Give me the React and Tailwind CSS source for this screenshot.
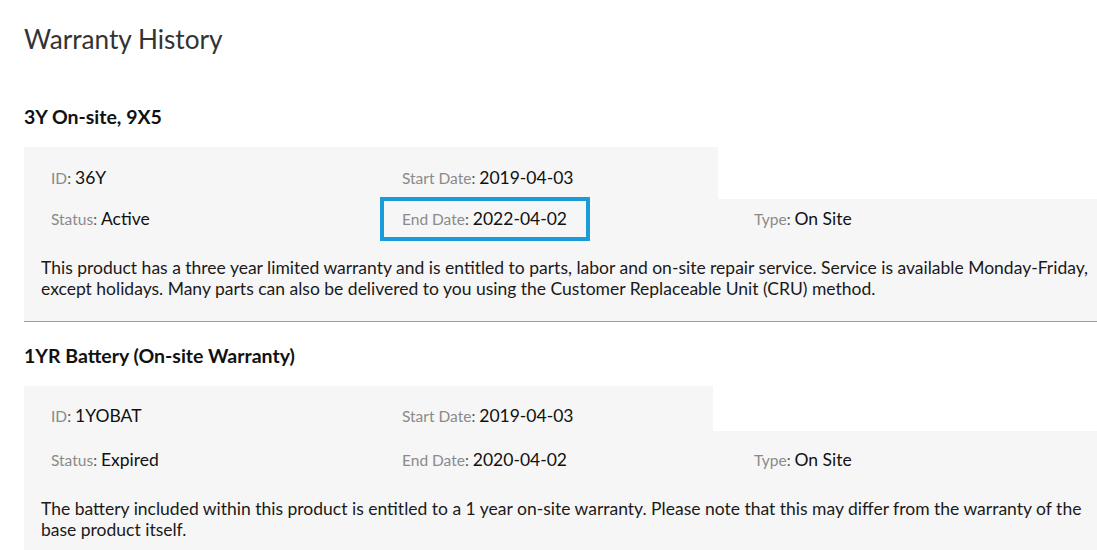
const Field = ({ label, value }) => (
  <span className="whitespace-nowrap">
    <span className="text-[15.5px] text-[#8a8a8a]">{label}</span>
    <span className="text-[15.5px] text-[#555]">: </span>
    <span className="text-[17.5px] text-[#111]">{value}</span>
  </span>
);

const Highlight = ({ children }) => (
  <span className="inline-flex items-center h-[44px] -ml-[22px] pl-[18px] pr-[19px] border-4 border-[#1a9cd8]">
    {children}
  </span>
);

const App = () => {
  return (
    <div className="w-[1097px] h-[550px] overflow-hidden bg-white pl-[24px]" style={{ fontFamily: "Lato, 'Open Sans', sans-serif" }}>
      <h1 className="pt-[23px] text-[26.2px] leading-[32px] text-[#333] font-normal">Warranty History</h1>

      {/* 3Y warranty */}
      <h2 className="mt-[50px] text-[19.5px] leading-[24px] font-bold text-[#111]">3Y On-site, 9X5</h2>
      <div className="mt-[18px] border-b border-[#9d9d9d]">
        <div className="w-[694px] h-[52px] bg-[#f6f6f6] grid grid-cols-[351px_1fr] pt-[20px] leading-[22px]">
          <div className="pl-[27px]"><Field label="ID" value="36Y" /></div>
          <div className="pl-[27px]"><Field label="Start Date" value="2019-04-03" /></div>
        </div>
        <div className="bg-[#f6f6f6] grid grid-cols-[351px_352px_1fr] h-[49px] leading-[22px] items-start">
          <div className="pl-[27px] pt-[9px]"><Field label="Status" value="Active" /></div>
          <div className="pl-[27px] -mt-[2px]">
            <Highlight><Field label="End Date" value="2022-04-02" /></Highlight>
          </div>
          <div className="pl-[27px] pt-[9px]"><Field label="Type" value="On Site" /></div>
        </div>
        <p className="bg-[#f6f6f6] pl-[17px] pt-[9px] pb-[22px] text-[17.5px] leading-[21px] text-[#1a1a1a]">
          This product has a three year limited warranty and is entitled to parts, labor and on-site repair service. Service is available Monday-Friday, except holidays. Many parts can also be delivered to you using the Customer Replaceable Unit (CRU) method.
        </p>
      </div>

      {/* Battery warranty */}
      <h2 className="mt-[22px] text-[19.5px] leading-[24px] font-bold text-[#111]">1YR Battery (On-site Warranty)</h2>
      <div className="mt-[18px]">
        <div className="w-[689px] h-[45px] bg-[#f6f6f6] grid grid-cols-[351px_1fr] pt-[19px] leading-[22px]">
          <div className="pl-[27px]"><Field label="ID" value="1YOBAT" /></div>
          <div className="pl-[27px]"><Field label="Start Date" value="2019-04-03" /></div>
        </div>
        <div className="bg-[#f6f6f6] grid grid-cols-[351px_352px_1fr] pt-[18px] pb-[26px] leading-[22px]">
          <div className="pl-[27px]"><Field label="Status" value="Expired" /></div>
          <div className="pl-[27px]"><Field label="End Date" value="2020-04-02" /></div>
          <div className="pl-[27px]"><Field label="Type" value="On Site" /></div>
        </div>
        <p className="bg-[#f6f6f6] pl-[17px] pt-[1px] pb-[30px] text-[17.5px] leading-[21px] text-[#1a1a1a]">
          The battery included within this product is entitled to a 1 year on-site warranty. Please note that this may differ from the warranty of the base product itself.
        </p>
      </div>
    </div>
  );
};

export default App;
